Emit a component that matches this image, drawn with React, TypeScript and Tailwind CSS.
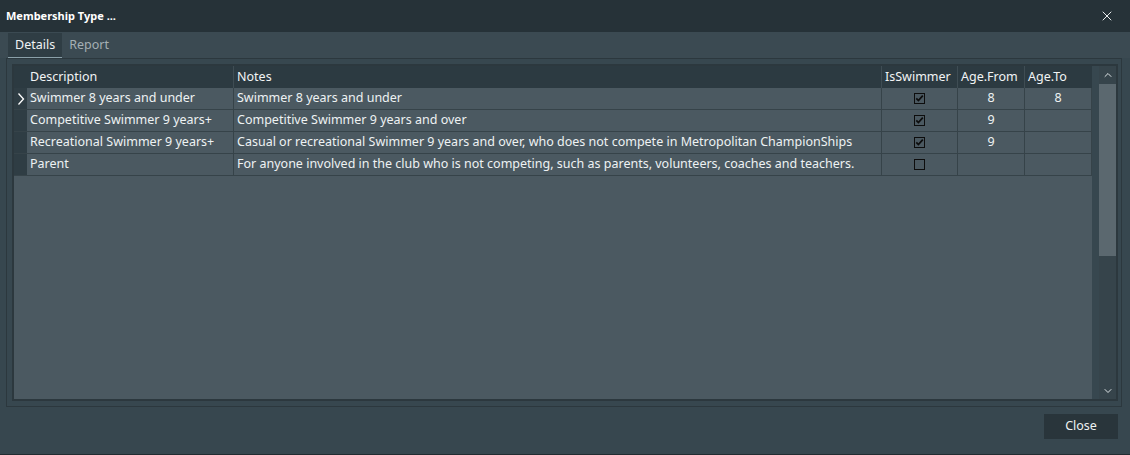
import { X, ChevronUp, ChevronDown } from "lucide-react";

type Row = {
  description: string;
  notes: string;
  isSwimmer: boolean;
  ageFrom?: number;
  ageTo?: number;
};

const rows: Row[] = [
  { description: "Swimmer 8 years and under", notes: "Swimmer 8 years and under", isSwimmer: true, ageFrom: 8, ageTo: 8 },
  { description: "Competitive Swimmer 9 years+", notes: "Competitive Swimmer 9 years and over", isSwimmer: true, ageFrom: 9 },
  {
    description: "Recreational Swimmer 9 years+",
    notes: "Casual or recreational Swimmer 9 years and over, who does not compete in Metropolitan ChampionShips",
    isSwimmer: true,
    ageFrom: 9
  },
  {
    description: "Parent",
    notes: "For anyone involved in the club who is not competing, such as parents, volunteers, coaches and teachers.",
    isSwimmer: false
  }
];

const CheckBox = ({ checked }: { checked: boolean }) => (
  <svg width="11" height="11" viewBox="0 0 11 11" className="block">
    <rect x="0.5" y="0.5" width="10" height="10" fill="none" stroke="#0d0d0d" strokeWidth="1" />
    {checked ? <path d="M2.3 5.4 L4.4 7.6 L8.8 2.6" fill="none" stroke="#0d0d0d" strokeWidth="1.7" /> : null}
  </svg>
);

const cell = "h-[22px] flex items-center border-r border-b border-[#364349] px-[3px] truncate";

export default function App() {
  return (
    <div
      className="w-[1130px] h-[455px] flex flex-col bg-[#37474f] text-[12.5px] text-[#eef2f3] border-b border-[#222c31]"
      style={{ fontFamily: '"Noto Sans", "Open Sans", sans-serif' }}
    >
      <div className="h-[32px] shrink-0 flex items-center justify-between bg-[#263238] pl-[6px] pr-[15px]">
        <span className="text-[11px] font-bold text-white">Membership Type ...</span>
        <X size={16} strokeWidth={1.5} className="text-[#e8eced]" />
      </div>

      <div className="flex-1 flex flex-col px-[6px]">
        <div className="h-[26px] flex items-end bg-[#3b4a52] -mx-[6px] px-[8px]">
          <div className="h-[25px] px-[7px] flex items-center bg-[#2f3d44] border-b border-[#8ba0a9] text-[#f0f3f4]">
            Details
          </div>
          <div className="h-[25px] px-[7px] flex items-center text-[#a4afb4]">Report</div>
        </div>

        <div className="h-[349px] mr-[2px] border border-[#2c383e] bg-[#37474f] p-[5px] flex">
          <div className="flex-1 flex border-[2px] border-[#2c383e] bg-[#4b5961]">
            <div className="flex-1 flex flex-col">
              <div className="flex h-[22px] bg-[#2c3a41] text-[#f2f4f5]">
                <div className="w-[13px] shrink-0" />
                <div className="w-[207px] flex items-center px-[3px] border-r border-[#3f4d54]">Description</div>
                <div className="w-[648px] flex items-center px-[3px] border-r border-[#3f4d54]">Notes</div>
                <div className="w-[76px] flex items-center px-[3px] border-r border-[#3f4d54]">IsSwimmer</div>
                <div className="w-[67px] flex items-center px-[3px] border-r border-[#3f4d54]">Age.From</div>
                <div className="w-[67px] flex items-center px-[3px]">Age.To</div>
              </div>
              {rows.map((r, i) => (
                <div key={r.description} className="flex">
                  <div className="w-[13px] h-[22px] shrink-0 flex items-center justify-center bg-[#2f3d44] border-b border-[#364349]">
                    {i === 0 ? (
                      <svg width="8" height="14" viewBox="0 0 8 14">
                        <path d="M1.5 1.5 L6.5 7 L1.5 12.5" fill="none" stroke="#ffffff" strokeWidth="1.3" />
                      </svg>
                    ) : null}
                  </div>
                  <div className={`${cell} w-[207px]`}>{r.description}</div>
                  <div className={`${cell} w-[648px]`}>{r.notes}</div>
                  <div className={`${cell} w-[76px] justify-center`}>
                    <CheckBox checked={r.isSwimmer} />
                  </div>
                  <div className={`${cell} w-[67px] justify-center`}>{r.ageFrom ?? ""}</div>
                  <div className={`${cell} w-[67px] justify-center`}>{r.ageTo ?? ""}</div>
                </div>
              ))}
            </div>
            <div className="w-[24px] flex bg-[#37474f] pl-[7px]">
              <div className="flex-1 flex flex-col bg-[#36444b]">
                <div className="h-[18px] flex items-center justify-center">
                  <ChevronUp size={12} strokeWidth={2} className="text-[#dfe5e7]" />
                </div>
                <div className="h-[172px] bg-[#5b686f]" />
                <div className="flex-1" />
                <div className="h-[16px] flex items-center justify-center">
                  <ChevronDown size={12} strokeWidth={2} className="text-[#dfe5e7]" />
                </div>
              </div>
            </div>
          </div>
        </div>

        <div className="flex-1 flex items-start justify-end pt-[7px] pr-[6px]">
          <button className="w-[74px] h-[25px] bg-[#29353b] text-[#eef2f3] text-[12.5px]">Close</button>
        </div>
      </div>
    </div>
  );
}
